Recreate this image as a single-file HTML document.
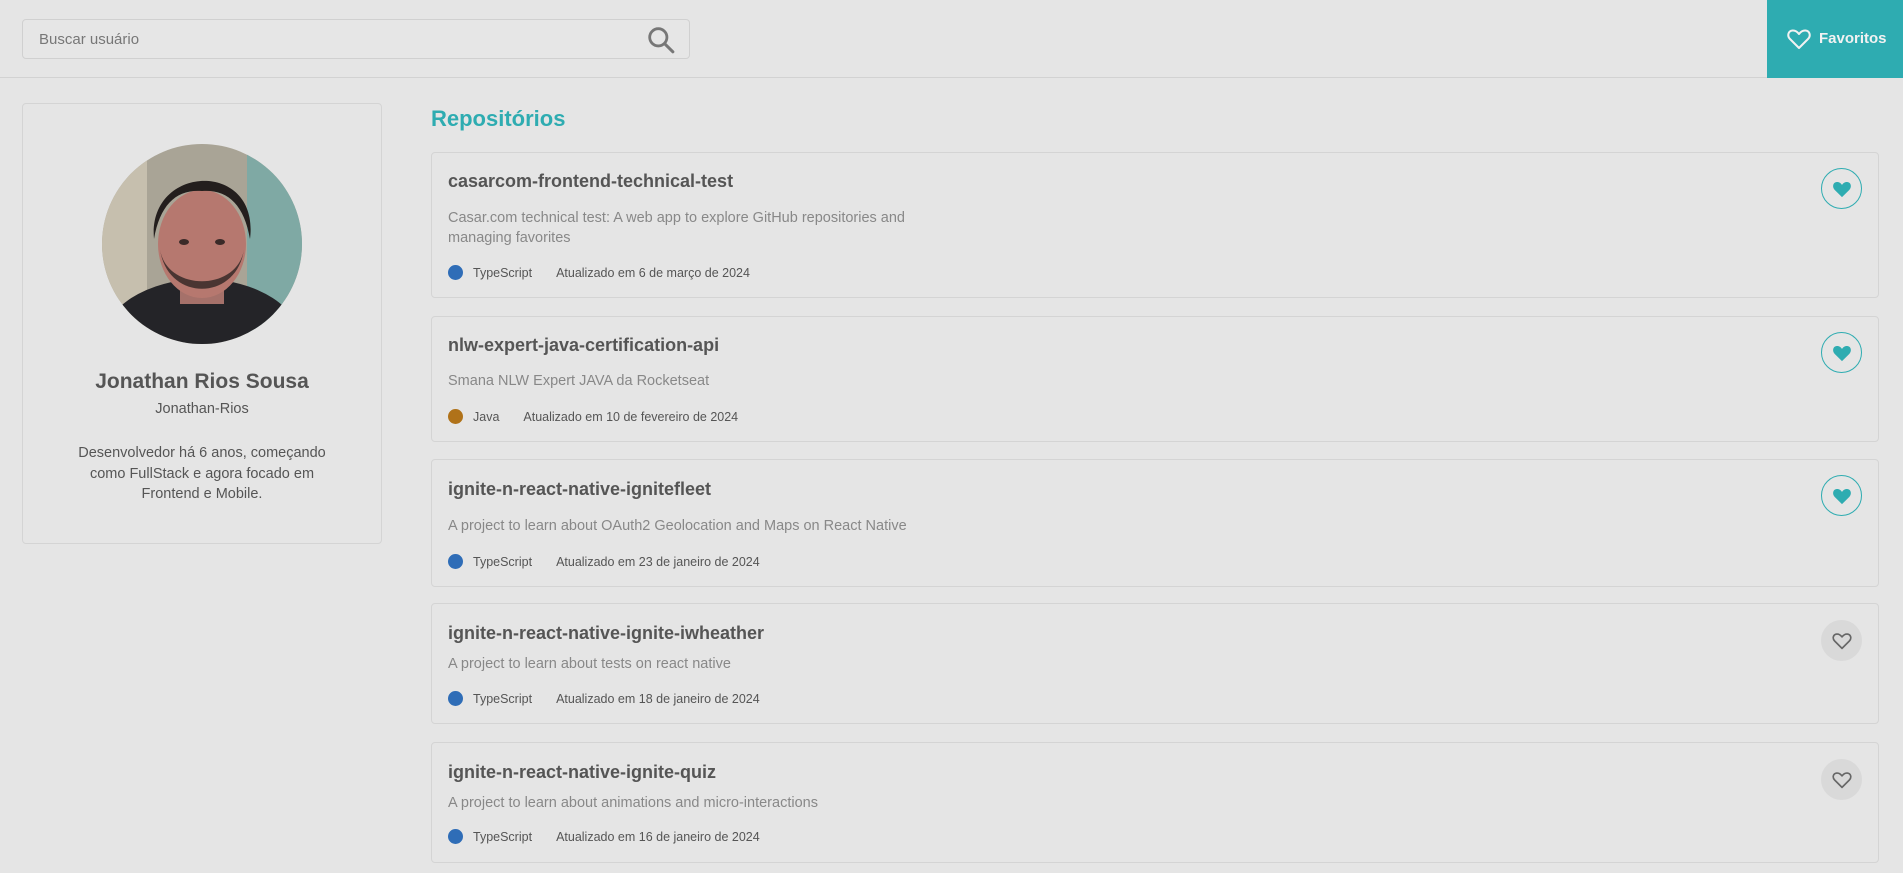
<!DOCTYPE html>
<html><head><meta charset="utf-8"><style>
*{box-sizing:border-box;margin:0;padding:0}
body{width:1903px;height:873px;background:#e5e5e5;font-family:"Liberation Sans",sans-serif;position:relative;overflow:hidden;color:#555}
.abs{position:absolute}
.header{left:0;top:0;width:1903px;height:78px;border-bottom:1px solid #d2d2d2}
.search{left:22px;top:19px;width:668px;height:40px;border:1px solid #d0d0d0;border-radius:4px;background:#e6e6e6}
.search span{position:absolute;left:16px;top:11px;font-size:15px;color:#777}
.fav{left:1767px;top:0;width:136px;height:78px;background:#2eacb1;color:#f2f2f2;font-size:15px;font-weight:bold}
.side{left:22px;top:103px;width:360px;height:441px;border:1px solid #d4d4d4;border-radius:4px}
.avatar{top:144px;width:200px;height:200px;border-radius:50%;overflow:hidden}
.card{left:431px;width:1448px;border:1px solid #d4d4d4;border-radius:4px}
.t{left:448px;font-size:18px;font-weight:bold;color:#555}
.d{left:448px;font-size:14.5px;color:#888;line-height:20px}
.m{left:448px;font-size:12.5px;color:#555;display:flex;align-items:center}
.dot{width:15px;height:15px;border-radius:50%;margin-right:10px}
.h{left:1821px;width:41px;height:41px;border-radius:50%;display:flex;align-items:center;justify-content:center}
.on{border:1px solid #2eacb1}
.off{background:#d9d9d9}
</style></head><body>
<div class="abs header"></div>
<div class="abs search"><span>Buscar usuário</span>
<svg class="abs" style="left:624px;top:6px" width="28" height="28" viewBox="0 0 26 26"><circle cx="10.5" cy="10.5" r="8" fill="none" stroke="#777" stroke-width="2.6"/><line x1="16.5" y1="16.5" x2="24" y2="24" stroke="#777" stroke-width="2.8" stroke-linecap="round"/></svg></div>
<div class="abs fav"><svg class="abs" style="left:20px;top:28px" width="24" height="22" viewBox="0 0 24 22"><path d="M12 20 L3 11 C0 8 1 3 5.5 2.5 C8.5 2.2 10.5 4 12 6 C13.5 4 15.5 2.2 18.5 2.5 C23 3 24 8 21 11 Z" fill="none" stroke="#f2f2f2" stroke-width="2" stroke-linejoin="round"/></svg><span class="abs" style="left:52px;top:30px">Favoritos</span></div>

<div class="abs side"></div>
<div class="abs avatar" style="left:102px">
<svg width="200" height="200" viewBox="0 0 200 200"><rect width="200" height="200" fill="#a9a496"/><rect x="145" width="55" height="200" fill="#7fa9a4"/><rect x="0" y="0" width="45" height="200" fill="#c6bfae"/><ellipse cx="100" cy="200" rx="100" ry="65" fill="#242428"/><rect x="78" y="125" width="44" height="35" fill="#a5716a"/><ellipse cx="100" cy="100" rx="44" ry="54" fill="#b6786f"/><path d="M52 95 C45 20 158 15 148 95 C142 60 125 45 100 47 C75 45 58 60 52 95Z" fill="#231e1d"/><path d="M58 105 C65 158 135 158 142 105 C136 148 64 148 58 105Z" fill="#4a3532"/><ellipse cx="82" cy="98" rx="5" ry="3" fill="#3a2a28"/><ellipse cx="118" cy="98" rx="5" ry="3" fill="#3a2a28"/></svg></div>
<div class="abs" style="left:22px;width:360px;top:370px;text-align:center;font-size:21px;font-weight:bold">Jonathan Rios Sousa</div>
<div class="abs" style="left:22px;width:360px;top:401px;text-align:center;font-size:14.5px">Jonathan-Rios</div>
<div class="abs" style="left:22px;width:360px;top:443px;text-align:center;font-size:14.5px;line-height:20.5px">Desenvolvedor há 6 anos, começando<br>como FullStack e agora focado em<br>Frontend e Mobile.</div>

<div class="abs" style="left:431px;top:106px;font-size:22px;font-weight:bold;color:#2eacb1">Repositórios</div>

<div class="abs card" style="top:152px;height:146px"></div>
<div class="abs t" style="top:171px">casarcom-frontend-technical-test</div>
<div class="abs d" style="top:208px">Casar.com technical test: A web app to explore GitHub repositories and<br>managing favorites</div>
<div class="abs m" style="top:265px"><span class="dot" style="background:#2f6db7"></span>TypeScript<span style="margin-left:24px">Atualizado em 6 de março de 2024</span></div>
<div class="abs h on" style="top:168px"><svg width="20" height="18" viewBox="0 0 24 22"><path d="M12 21 L3 12 C0 9 0.5 3 5.5 2.5 C8.5 2.2 10.5 4 12 6 C13.5 4 15.5 2.2 18.5 2.5 C23.5 3 24 9 21 12 Z" fill="#2eacb1"/></svg></div>

<div class="abs card" style="top:316px;height:126px"></div>
<div class="abs t" style="top:335px">nlw-expert-java-certification-api</div>
<div class="abs d" style="top:371px">Smana NLW Expert JAVA da Rocketseat</div>
<div class="abs m" style="top:409px"><span class="dot" style="background:#b07219"></span>Java<span style="margin-left:24px">Atualizado em 10 de fevereiro de 2024</span></div>
<div class="abs h on" style="top:332px"><svg width="20" height="18" viewBox="0 0 24 22"><path d="M12 21 L3 12 C0 9 0.5 3 5.5 2.5 C8.5 2.2 10.5 4 12 6 C13.5 4 15.5 2.2 18.5 2.5 C23.5 3 24 9 21 12 Z" fill="#2eacb1"/></svg></div>

<div class="abs card" style="top:459px;height:128px"></div>
<div class="abs t" style="top:479px">ignite-n-react-native-ignitefleet</div>
<div class="abs d" style="top:516px">A project to learn about OAuth2 Geolocation and Maps on React Native</div>
<div class="abs m" style="top:554px"><span class="dot" style="background:#2f6db7"></span>TypeScript<span style="margin-left:24px">Atualizado em 23 de janeiro de 2024</span></div>
<div class="abs h on" style="top:475px"><svg width="20" height="18" viewBox="0 0 24 22"><path d="M12 21 L3 12 C0 9 0.5 3 5.5 2.5 C8.5 2.2 10.5 4 12 6 C13.5 4 15.5 2.2 18.5 2.5 C23.5 3 24 9 21 12 Z" fill="#2eacb1"/></svg></div>

<div class="abs card" style="top:603px;height:121px"></div>
<div class="abs t" style="top:623px">ignite-n-react-native-ignite-iwheather</div>
<div class="abs d" style="top:654px">A project to learn about tests on react native</div>
<div class="abs m" style="top:691px"><span class="dot" style="background:#2f6db7"></span>TypeScript<span style="margin-left:24px">Atualizado em 18 de janeiro de 2024</span></div>
<div class="abs h off" style="top:620px"><svg width="20" height="18" viewBox="0 0 24 22"><path d="M12 20 L3 11 C0 8 1 3 5.5 2.5 C8.5 2.2 10.5 4 12 6 C13.5 4 15.5 2.2 18.5 2.5 C23 3 24 8 21 11 Z" fill="none" stroke="#666" stroke-width="2" stroke-linejoin="round"/></svg></div>

<div class="abs card" style="top:742px;height:121px"></div>
<div class="abs t" style="top:762px">ignite-n-react-native-ignite-quiz</div>
<div class="abs d" style="top:793px">A project to learn about animations and micro-interactions</div>
<div class="abs m" style="top:829px"><span class="dot" style="background:#2f6db7"></span>TypeScript<span style="margin-left:24px">Atualizado em 16 de janeiro de 2024</span></div>
<div class="abs h off" style="top:759px"><svg width="20" height="18" viewBox="0 0 24 22"><path d="M12 20 L3 11 C0 8 1 3 5.5 2.5 C8.5 2.2 10.5 4 12 6 C13.5 4 15.5 2.2 18.5 2.5 C23 3 24 8 21 11 Z" fill="none" stroke="#666" stroke-width="2" stroke-linejoin="round"/></svg></div>
</body></html>
